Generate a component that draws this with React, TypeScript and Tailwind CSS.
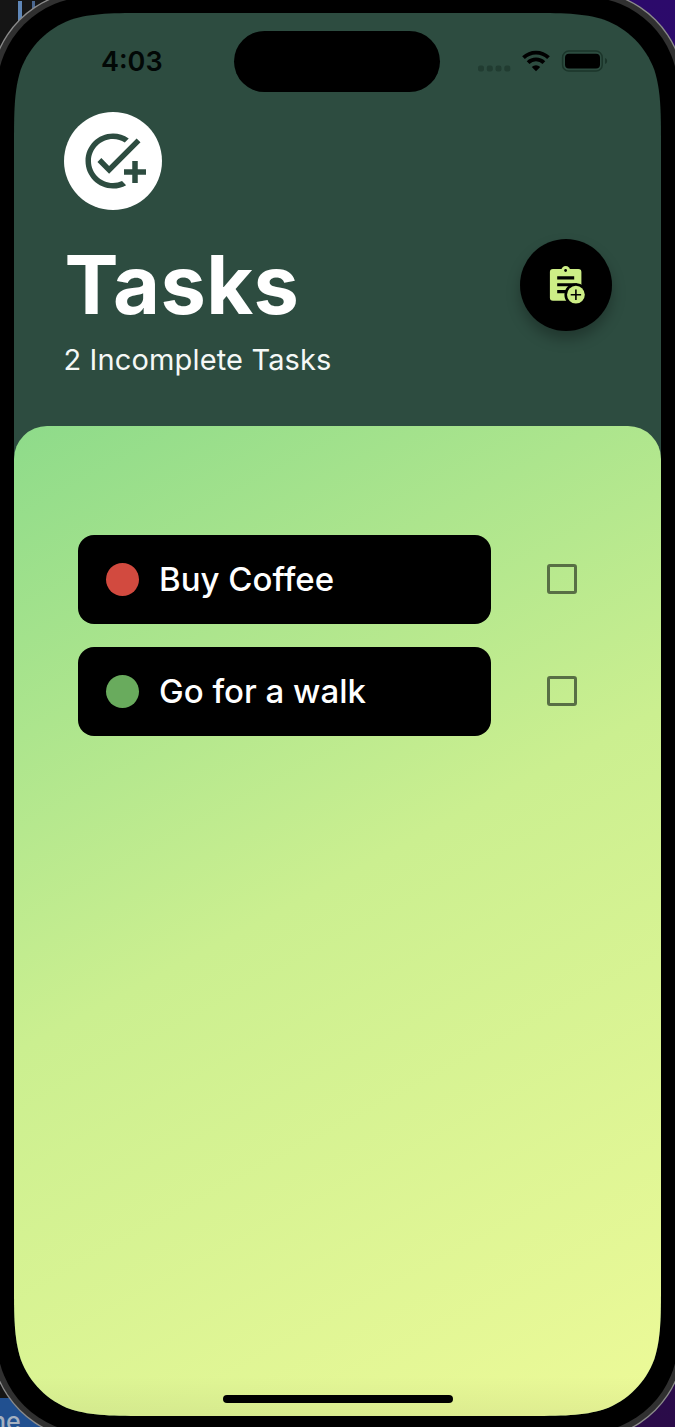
import React from "react";
import { MdAddTask } from "react-icons/md";

const tasks = [
  { title: "Buy Coffee", dot: "bg-[#d24a3f]" },
  { title: "Go for a walk", dot: "bg-[#69ab5d]" },
];

function DeviceFrame() {
  return (
    <svg className="absolute inset-0" width="675" height="1427" viewBox="0 0 675 1427" aria-hidden="true">
      <defs>
        <linearGradient id="desk" x1="0" y1="0" x2="0" y2="1">
          <stop offset="0" stopColor="#2c0a6b" />
          <stop offset="1" stopColor="#2a0b49" />
        </linearGradient>
      </defs>
      <rect width="675" height="1427" fill="#151515" />
      <rect x="400" width="275" height="1427" fill="url(#desk)" />
      <rect x="18" y="1" width="4" height="20" fill="#5f87b8" />
      <rect x="32" y="1" width="3" height="10" fill="#4a6790" />
      <rect x="0" y="1398" width="60" height="29" fill="#215090" />
      <text x="-9" y="1430" fontFamily="Inter, sans-serif" fontSize="25" fontWeight="500" fill="#a5b0c0">ne</text>
      <rect x="-10" y="-10" width="695" height="1450" rx="100" fill="#8c8c8c" />
      <rect x="-8.700" y="-8.700" width="692.400" height="1447.400" rx="98.700" fill="#303030" />
      <rect x="-3" y="-3" width="681" height="1436" rx="93" fill="#000" />
    </svg>
  );
}

function StatusBar() {
  return (
    <div className="flex h-[98.5px] shrink-0 items-start">
      <div className="w-[220.4px] pl-[87px] pt-[33px] font-[Inter] text-[27px] font-semibold leading-8 text-[#020806]">4:03</div>
      <div className="mt-[18.3px] h-[61px] w-[206px] rounded-full bg-black" />
      <svg className="ml-[36.6px] mt-[35px]" width="132" height="28" viewBox="0 0 132 28">
        <g fill="#213c31">
          <rect x="1" y="17.500" width="6" height="6" rx="2.200" />
          <rect x="9.800" y="17.500" width="6" height="6" rx="2.200" />
          <rect x="18.500" y="17.500" width="6" height="6" rx="2.200" />
          <rect x="27.300" y="17.500" width="6" height="6" rx="2.200" />
        </g>
        <g fill="none" stroke="#000" strokeWidth="3.900">
          <path d="M46.500 9.700a18 18 0 0 1 25 0" />
          <path d="M51.100 14.600a11.300 11.300 0 0 1 15.800 0" />
        </g>
        <path d="M59 23.300l-4.200-4.300a6 6 0 0 1 8.400 0z" fill="#000" />
        <rect x="85.600" y="3.100" width="39.600" height="20" rx="6.200" fill="none" stroke="#1b352a" strokeWidth="1.500" />
        <rect x="88" y="5.800" width="35" height="14.700" rx="4" fill="#000" />
        <path d="M128 10q2.200 .5 2.200 3t-2.200 3z" fill="#1b352a" />
      </svg>
    </div>
  );
}

function NoteAddIcon() {
  return (
    <svg className="overflow-visible" width="36" height="40" viewBox="0 0 36 40">
      <g fill="#cdee86">
        <rect x="1.900" y="4" width="31.500" height="31.700" rx="3" />
        <circle cx="17.700" cy="5.700" r="4.600" />
      </g>
      <circle cx="17.600" cy="5.500" r="1.400" />
      <path d="M9.200 11.200h17v3.400h-17zM9.200 18.200h20v3h-20zM9.200 24.900h12v3.300h-12z" />
      <path d="M27.900 18.200a11.500 11.500 0 1 0 0 23a11.500 11.500 0 1 0 0-23z" />
      <circle cx="27.900" cy="29.700" r="8.900" fill="#cdee86" />
      <path d="M27.900 24.500v10.400M22.700 29.700h10.400" stroke="#000" strokeWidth="1.600" />
    </svg>
  );
}

export default function App() {
  return (
    <div className="relative h-[1427px] w-[675px] overflow-hidden bg-black px-[14px] pt-[13px] font-[Inter]">
      <DeviceFrame />
      <main className="relative flex h-[1403px] w-[647px] flex-col bg-[#2d4c40] [clip-path:path('M137.6_0H509.4C549_0_568.800_0_590.200_6.700C613.400_15.200_631.800_33.600_640.300_56.800C647_78.200_647_98_647_137.600V1265.400C647_1305_647_1324.800_640.300_1346.200C631.800_1369.400_613.400_1387.800_590.200_1396.300C568.800_1403_549_1403_509.400_1403H137.600C98_1403_78.200_1403_56.800_1396.300C33.600_1387.800_15.200_1369.400_6.700_1346.200C0_1324.800_0_1305_0_1265.400V137.600C0_98_0_78.200_6.700_56.800C15.200_33.600_33.600_15.200_56.800_6.700C78.200_0_98_0_137.600_0Z')]">
        <StatusBar />
        <header className="flex h-[314.5px] shrink-0 flex-col px-[49.5px]">
          <div className="flex size-[98.5px] items-center justify-center rounded-full bg-white">
            <MdAddTask size={66} color="#2d4c40" />
          </div>
          <div className="flex items-start justify-between">
            <div>
              <h1 className="ml-px mt-[27px] h-[98px] whitespace-nowrap text-[81px] font-bold leading-[97px] tracking-[0.4px] text-white">Tasks</h1>
              <p className="mt-[7px] whitespace-nowrap text-[29px] leading-9 tracking-[0.14px] text-[#f5f8f6]">2 Incomplete Tasks</p>
            </div>
            <button aria-label="Add task" className="mt-[28.5px] flex size-[92px] items-center justify-center rounded-full bg-black shadow-[0_8px_14px_rgba(0,0,0,0.28)]">
              <NoteAddIcon />
            </button>
          </div>
        </header>
        <section className="flex flex-1 flex-col rounded-t-[33px] bg-[linear-gradient(to_top,rgba(0,0,0,0.05),transparent_40px),linear-gradient(152deg,#8edb8a_0%,#cbef90_47%,#edfa98_100%)] pl-[64px] pt-[109px]">
          <ul className="flex flex-col gap-[23px]">
            {tasks.map((task) => (
              <li key={task.title} className="flex items-center">
                <div className="flex h-[89px] w-[413px] items-center rounded-[16px] bg-black pl-[28px]">
                  <span className={`size-[33px] rounded-full ${task.dot}`} />
                  <span className="-mt-[0.6px] ml-[20px] whitespace-nowrap text-[33px] font-medium leading-10 text-white">{task.title}</span>
                </div>
                <span role="checkbox" aria-checked="false" className="-mt-px ml-[56px] size-[30px] rounded-[3px] border-[3px] border-[#586f45]" />
              </li>
            ))}
          </ul>
          <div className="mb-[13px] ml-[144.5px] mt-auto h-[8.500px] w-[230.500px] rounded-full bg-black" />
        </section>
      </main>
    </div>
  );
}
